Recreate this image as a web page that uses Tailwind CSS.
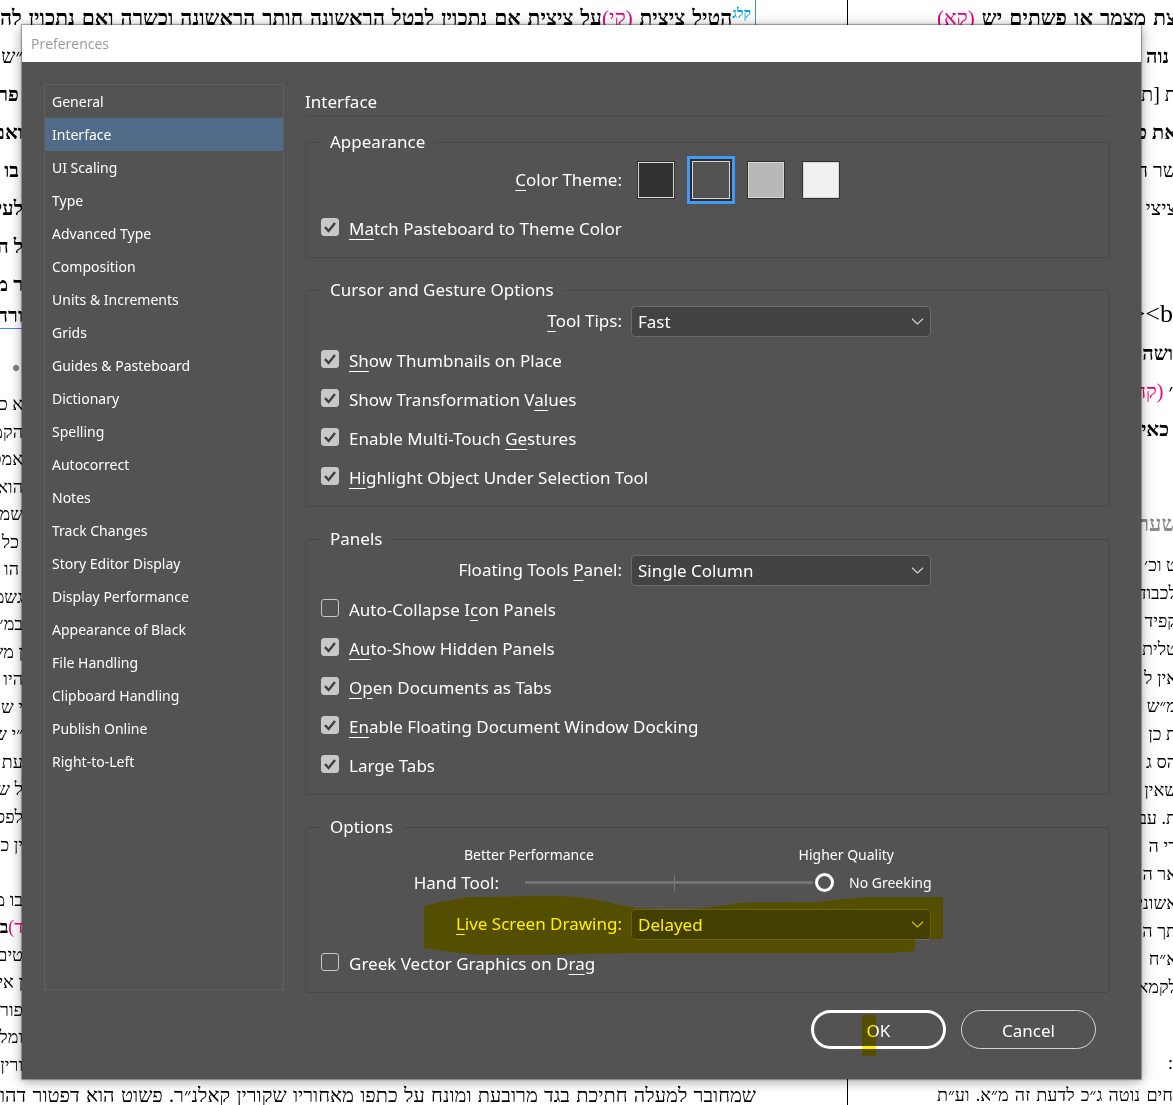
<!DOCTYPE html>
<html lang="en">
<head>
	<meta charset="UTF-8">
	<meta name="viewport" content="width=device-width, initial-scale=1.0">
	<title>Preferences</title>
	<script src="https://cdn.jsdelivr.net/npm/@tailwindcss/browser@4"></script>
</head>
<body class="relative min-h-screen overflow-hidden bg-white font-['Noto_Sans',sans-serif]">

	<!-- Document pages behind the dialog -->
	<div class="absolute inset-0 flex overflow-hidden whitespace-nowrap font-['Liberation_Serif',serif] text-[20px] text-black" dir="ltr" aria-hidden="true">
		<div class="relative flex w-[756px] shrink-0 flex-col justify-between" dir="rtl" lang="he">
			<p class="h-[37px] border-r border-[#3b8cf0] pr-1 text-[21px] leading-[37px] font-bold [text-align-last:justify]"><sup class="text-[14px] text-[#00a5e3]">קלג</sup>הטיל ציצית <span class="font-normal text-[#e6007e]">(קי)</span>על ציצית אם נתכוין לבטל הראשונה חותך הראשונה וכשרה ואם נתכוין לה</p>
			<div class="mr-auto flex w-[23px] grow flex-col">
				<div class="flex h-[290px] flex-col justify-between text-[20px] leading-[38px] font-bold">
					<p class="font-normal">״ש</p>
					<p class="pr-1">פר</p>
					<p>ואם</p>
					<p class="pr-1">בו</p>
					<p>לעי</p>
					<p>ל ה</p>
					<p>ר מ</p>
					<p class="border-b border-[#3b8cf0] leading-[25px]">ורה</p>
				</div>
				<div class="flex h-[64px] items-end pr-1 pb-[16px]"><span class="mb-1 size-[6px] rounded-full bg-[#808084]"></span></div>
				<div class="flex h-[688px] flex-col justify-between text-[18px] leading-[27px]">
					<p>א כ״</p>
					<p>הקמ</p>
					<p>אמט</p>
					<p>הוא</p>
					<p>שמת</p>
					<p class="pr-1">כל</p>
					<p class="pr-1">הו</p>
					<p>גשמ</p>
					<p>במ״</p>
					<p>ן מש</p>
					<p>היו</p>
					<p>י שמ</p>
					<p>״י ש</p>
					<p>עת</p>
					<p>ל ש</p>
					<p>לפס</p>
					<p>ין כ</p>
					<p>&nbsp;</p>
					<p>בו מ</p>
					<p class="font-bold"><span class="font-normal text-[#e6007e]">ד)</span>ב</p>
					<p>טים</p>
					<p>ן אי</p>
					<p>פור</p>
					<p>ומל</p>
					<p>ורין</p>
				</div>
			</div>
			<p class="h-[25px] text-[20px] leading-[31px] [text-align-last:justify]">שמחובר למעלה חתיכת בגד מרובעת ומונח על כתפו מאחוריו שקורין קאלנ״ר. פשוט הוא דפטור דהו</p>
		</div>
		<div class="flex min-w-0 grow">
			<div class="w-[92px] shrink-0 border-r border-black"></div>
			<div class="flex min-w-0 grow flex-col pl-[89px]" dir="rtl" lang="he">
				<p class="-mr-1 h-[37px] text-[21px] leading-[37px] font-bold [text-align-last:justify]">צת מצמר או פשתים יש <span class="font-normal text-[#e6007e]">(קא)</span></p>
				<div class="flex h-[190px] flex-col justify-between text-[20px] leading-[38px]">
					<p class="pr-1 font-bold">נוה</p>
					<p class="-mr-1">ת [ת</p>
					<p class="-mr-1 font-bold">את כ</p>
					<p class="-mr-1">שר ה</p>
					<p class="-mr-1">ציצי</p>
				</div>
				<div class="mt-[68px] flex h-[150px] flex-col justify-between text-[20px] leading-[38px] font-bold">
					<p class="font-normal"><span class="text-[26px]" dir="ltr">&gt;&lt;b</span></p>
					<p>ושה</p>
					<p>׳ <span class="font-normal text-[#e6007e]">(קה</span></p>
					<p class="pr-1">כאי</p>
				</div>
				<p class="mt-[60px] -mr-1 h-[38px] text-[22px] leading-[38px] font-bold text-[#8a8a8e]">שערי</p>
				<div class="mt-2 -mr-1 flex h-[450px] flex-col justify-between text-[18px] leading-[28px]">
					<p>ט וכ׳</p>
					<p>לכבוד</p>
					<p>קפיד</p>
					<p>טלית</p>
					<p>אין ל</p>
					<p>מ״ש י</p>
					<p>ת כן</p>
					<p>הס ג</p>
					<p>שאין</p>
					<p>ת. עב</p>
					<p>רי ה</p>
					<p>אר ה</p>
					<p>אשוני</p>
					<p>תך ה</p>
					<p>א״ח</p>
					<p>לקמא</p>
				</div>
				<p class="mt-[48px] text-[18px] leading-[28px]">:</p>
				<p class="mt-auto h-[25px] text-[18px] leading-[31px] [text-align-last:justify]">חים נוטה ג״כ לדעת זה מ״א. וע״ת</p>
			</div>
		</div>
	</div>

	<!-- Preferences dialog -->
	<div class="relative mt-[25px] mr-8 mb-[25px] ml-[22px] bg-[#535353] text-[17px] text-white shadow-[0_2px_12px_rgba(0,0,0,0.4),0_0_1px_1px_rgba(0,0,0,0.3)]" role="dialog" aria-labelledby="dialogTitle">
		<div class="h-[37px] bg-white px-[9px]">
			<h1 id="dialogTitle" class="font-['Open_Sans',sans-serif] text-[14px] leading-[37px] text-[#999999]">Preferences</h1>
		</div>

		<form class="flex gap-[21px] pt-[22px] pr-[31px] pb-[30px] pl-[22px]">
			<nav class="mb-[59px] w-[240px] shrink-0 border border-[#5f5f5f] text-[14px] leading-8">
				<a href="#" class="block px-[7px] pt-px">General</a>
				<a href="#" class="block bg-[#4f6b87] px-[7px] pt-px" aria-current="page">Interface</a>
				<a href="#" class="block px-[7px] pt-px">UI Scaling</a>
				<a href="#" class="block px-[7px] pt-px">Type</a>
				<a href="#" class="block px-[7px] pt-px">Advanced Type</a>
				<a href="#" class="block px-[7px] pt-px">Composition</a>
				<a href="#" class="block px-[7px] pt-px">Units &amp; Increments</a>
				<a href="#" class="block px-[7px] pt-px">Grids</a>
				<a href="#" class="block px-[7px] pt-px">Guides &amp; Pasteboard</a>
				<a href="#" class="block px-[7px] pt-px">Dictionary</a>
				<a href="#" class="block px-[7px] pt-px">Spelling</a>
				<a href="#" class="block px-[7px] pt-px">Autocorrect</a>
				<a href="#" class="block px-[7px] pt-px">Notes</a>
				<a href="#" class="block px-[7px] pt-px">Track Changes</a>
				<a href="#" class="block px-[7px] pt-px">Story Editor Display</a>
				<a href="#" class="block px-[7px] pt-px">Display Performance</a>
				<a href="#" class="block px-[7px] pt-px">Appearance of Black</a>
				<a href="#" class="block px-[7px] pt-px">File Handling</a>
				<a href="#" class="block px-[7px] pt-px">Clipboard Handling</a>
				<a href="#" class="block px-[7px] pt-px">Publish Online</a>
				<a href="#" class="block px-[7px] pt-px">Right-to-Left</a>
			</nav>

			<div class="min-w-0 grow">
				<h2 class="h-[33px] border-b border-[#4a4a4a] leading-9">Interface</h2>

				<div class="mt-[13px] flex flex-col gap-5">
					<fieldset class="rounded-[4px] border border-[#484848] pb-[9px] leading-6">
						<legend class="ml-[14px] px-[10px]">Appearance</legend>
						<div class="flex h-[55px] items-center pb-[3px]" role="radiogroup" aria-labelledby="themeLabel">
							<span id="themeLabel" class="w-[316px] shrink-0 text-right"><u class="underline-offset-4">C</u>olor Theme:</span>
							<div class="ml-[15px] flex gap-[17px]">
								<input type="radio" name="theme" aria-label="Dark" class="size-[38px] appearance-none border-2 border-[#d6d6d6] bg-[#323232] outline outline-[#333333] -outline-offset-1">
								<input type="radio" name="theme" aria-label="Medium dark" checked class="size-[38px] appearance-none border border-[#d6d6d6] bg-[#535353] shadow-[0_0_0_2px_#2e2e2e,0_0_0_5px_#3f9bf5]">
								<input type="radio" name="theme" aria-label="Medium light" class="size-[38px] appearance-none border-2 border-[#d6d6d6] bg-[#b8b8b8] outline outline-[#333333] -outline-offset-1">
								<input type="radio" name="theme" aria-label="Light" class="size-[38px] appearance-none border-2 border-[#d6d6d6] bg-[#f0f0f0] outline outline-[#333333] -outline-offset-1">
							</div>
						</div>
						<label class="flex h-[39px] items-center gap-[10px] pl-[15px]">
							<span class="relative mb-[3px] size-[18px]">
								<input type="checkbox" checked class="peer block size-[18px] appearance-none rounded-[3px] border border-[#c8c8c8] checked:bg-[#c8c8c8]">
								<svg class="pointer-events-none absolute inset-0 hidden peer-checked:block" viewBox="0 0 18 18" fill="none" stroke="#404040" stroke-width="2.4"><path d="M4 9.2l3.6 3.8L14 5"/></svg>
							</span>
							<span><u class="underline-offset-4">Ma</u>tch Pasteboard to Theme Color</span>
						</label>
					</fieldset>

					<fieldset class="rounded-[4px] border border-[#484848] pb-[9px] leading-6">
						<legend class="ml-[14px] px-[10px]">Cursor and Gesture Options</legend>
						<div class="flex h-[39px] items-center pb-px">
							<label for="toolTips" class="w-[316px] shrink-0 text-right"><u class="underline-offset-4">T</u>ool Tips:</label>
							<div class="relative ml-[9px] w-[300px]">
								<select id="toolTips" class="block h-[31px] w-full appearance-none rounded-[4px] border border-[#6b6b6b] bg-[#434343] pt-px pl-[6px]">
									<option>Fast</option>
									<option>Normal</option>
									<option>None</option>
								</select>
								<svg class="pointer-events-none absolute top-3 right-[7px] h-[7px] w-[13px]" viewBox="0 0 13 7" fill="none" stroke="#d0d0d0" stroke-width="1.2"><path d="M1 .8l5.5 5.2L12 .8"/></svg>
							</div>
						</div>
						<label class="flex h-[39px] items-center gap-[10px] pl-[15px]">
							<span class="relative mb-[3px] size-[18px]">
								<input type="checkbox" checked class="peer block size-[18px] appearance-none rounded-[3px] border border-[#c8c8c8] checked:bg-[#c8c8c8]">
								<svg class="pointer-events-none absolute inset-0 hidden peer-checked:block" viewBox="0 0 18 18" fill="none" stroke="#404040" stroke-width="2.4"><path d="M4 9.2l3.6 3.8L14 5"/></svg>
							</span>
							<span><u class="underline-offset-4">Sh</u>ow Thumbnails on Place</span>
						</label>
						<label class="flex h-[39px] items-center gap-[10px] pl-[15px]">
							<span class="relative mb-[3px] size-[18px]">
								<input type="checkbox" checked class="peer block size-[18px] appearance-none rounded-[3px] border border-[#c8c8c8] checked:bg-[#c8c8c8]">
								<svg class="pointer-events-none absolute inset-0 hidden peer-checked:block" viewBox="0 0 18 18" fill="none" stroke="#404040" stroke-width="2.4"><path d="M4 9.2l3.6 3.8L14 5"/></svg>
							</span>
							<span>Show Transformation V<u class="underline-offset-4">al</u>ues</span>
						</label>
						<label class="flex h-[39px] items-center gap-[10px] pl-[15px]">
							<span class="relative mb-[3px] size-[18px]">
								<input type="checkbox" checked class="peer block size-[18px] appearance-none rounded-[3px] border border-[#c8c8c8] checked:bg-[#c8c8c8]">
								<svg class="pointer-events-none absolute inset-0 hidden peer-checked:block" viewBox="0 0 18 18" fill="none" stroke="#404040" stroke-width="2.4"><path d="M4 9.2l3.6 3.8L14 5"/></svg>
							</span>
							<span>Enable Multi-Touch <u class="underline-offset-4">Ge</u>stures</span>
						</label>
						<label class="flex h-[39px] items-center gap-[10px] pl-[15px]">
							<span class="relative mb-[3px] size-[18px]">
								<input type="checkbox" checked class="peer block size-[18px] appearance-none rounded-[3px] border border-[#c8c8c8] checked:bg-[#c8c8c8]">
								<svg class="pointer-events-none absolute inset-0 hidden peer-checked:block" viewBox="0 0 18 18" fill="none" stroke="#404040" stroke-width="2.4"><path d="M4 9.2l3.6 3.8L14 5"/></svg>
							</span>
							<span><u class="underline-offset-4">Hi</u>ghlight Object Under Selection Tool</span>
						</label>
					</fieldset>

					<fieldset class="rounded-[4px] border border-[#484848] pb-[9px] leading-6">
						<legend class="ml-[14px] px-[10px]">Panels</legend>
						<div class="flex h-[39px] items-center pb-px">
							<label for="toolsPanel" class="w-[316px] shrink-0 text-right">Floating Tools <u class="underline-offset-4">P</u>anel:</label>
							<div class="relative ml-[9px] w-[300px]">
								<select id="toolsPanel" class="block h-[31px] w-full appearance-none rounded-[4px] border border-[#6b6b6b] bg-[#434343] pt-px pl-[6px]">
									<option>Single Column</option>
									<option>Double Column</option>
									<option>Single Row</option>
								</select>
								<svg class="pointer-events-none absolute top-3 right-[7px] h-[7px] w-[13px]" viewBox="0 0 13 7" fill="none" stroke="#d0d0d0" stroke-width="1.2"><path d="M1 .8l5.5 5.2L12 .8"/></svg>
							</div>
						</div>
						<label class="flex h-[39px] items-center gap-[10px] pl-[15px]">
							<span class="relative mb-[3px] size-[18px]">
								<input type="checkbox" class="peer block size-[18px] appearance-none rounded-[3px] border border-[#c8c8c8] checked:bg-[#c8c8c8]">
								<svg class="pointer-events-none absolute inset-0 hidden peer-checked:block" viewBox="0 0 18 18" fill="none" stroke="#404040" stroke-width="2.4"><path d="M4 9.2l3.6 3.8L14 5"/></svg>
							</span>
							<span>Auto-Collapse I<u class="underline-offset-4">c</u>on Panels</span>
						</label>
						<label class="flex h-[39px] items-center gap-[10px] pl-[15px]">
							<span class="relative mb-[3px] size-[18px]">
								<input type="checkbox" checked class="peer block size-[18px] appearance-none rounded-[3px] border border-[#c8c8c8] checked:bg-[#c8c8c8]">
								<svg class="pointer-events-none absolute inset-0 hidden peer-checked:block" viewBox="0 0 18 18" fill="none" stroke="#404040" stroke-width="2.4"><path d="M4 9.2l3.6 3.8L14 5"/></svg>
							</span>
							<span><u class="underline-offset-4">Au</u>to-Show Hidden Panels</span>
						</label>
						<label class="flex h-[39px] items-center gap-[10px] pl-[15px]">
							<span class="relative mb-[3px] size-[18px]">
								<input type="checkbox" checked class="peer block size-[18px] appearance-none rounded-[3px] border border-[#c8c8c8] checked:bg-[#c8c8c8]">
								<svg class="pointer-events-none absolute inset-0 hidden peer-checked:block" viewBox="0 0 18 18" fill="none" stroke="#404040" stroke-width="2.4"><path d="M4 9.2l3.6 3.8L14 5"/></svg>
							</span>
							<span><u class="underline-offset-4">Op</u>en Documents as Tabs</span>
						</label>
						<label class="flex h-[39px] items-center gap-[10px] pl-[15px]">
							<span class="relative mb-[3px] size-[18px]">
								<input type="checkbox" checked class="peer block size-[18px] appearance-none rounded-[3px] border border-[#c8c8c8] checked:bg-[#c8c8c8]">
								<svg class="pointer-events-none absolute inset-0 hidden peer-checked:block" viewBox="0 0 18 18" fill="none" stroke="#404040" stroke-width="2.4"><path d="M4 9.2l3.6 3.8L14 5"/></svg>
							</span>
							<span><u class="underline-offset-4">En</u>able Floating Document Window Docking</span>
						</label>
						<label class="flex h-[39px] items-center gap-[10px] pl-[15px]">
							<span class="relative mb-[3px] size-[18px]">
								<input type="checkbox" checked class="peer block size-[18px] appearance-none rounded-[3px] border border-[#c8c8c8] checked:bg-[#c8c8c8]">
								<svg class="pointer-events-none absolute inset-0 hidden peer-checked:block" viewBox="0 0 18 18" fill="none" stroke="#404040" stroke-width="2.4"><path d="M4 9.2l3.6 3.8L14 5"/></svg>
							</span>
							<span>Large Tabs</span>
						</label>
					</fieldset>

					<fieldset class="rounded-[4px] border border-[#484848] pb-[9px] leading-6">
						<legend class="ml-[14px] px-[10px]">Options</legend>
						<div class="flex h-[31px] w-[588px] items-center justify-between pl-[158px] text-[14px]">
							<span>Better Performance</span>
							<span>Higher Quality</span>
						</div>
						<div class="mb-[10px] flex h-[25px] items-center">
							<label for="handTool" class="w-[193px] shrink-0 text-right">Hand Tool:</label>
							<div class="relative ml-[26px] flex h-full w-[309px] items-center">
								<span class="absolute top-[5px] left-[149px] h-4 w-px bg-[#7a7a7a]"></span>
								<input id="handTool" type="range" min="0" max="2" value="2" class="relative w-full appearance-none bg-transparent [&::-webkit-slider-runnable-track]:h-[3px] [&::-webkit-slider-runnable-track]:bg-[#747474] [&::-webkit-slider-thumb]:-mt-2 [&::-webkit-slider-thumb]:size-[19px] [&::-webkit-slider-thumb]:appearance-none [&::-webkit-slider-thumb]:rounded-full [&::-webkit-slider-thumb]:border-[3px] [&::-webkit-slider-thumb]:border-white [&::-webkit-slider-thumb]:bg-[#535353] [&::-webkit-slider-thumb]:shadow-[0_0_0_2px_#535353]">
							</div>
							<output for="handTool" class="ml-[15px] text-[14px]">No Greeking</output>
						</div>
						<div class="relative flex h-[39px] items-center pb-px">
							<label for="liveDrawing" class="w-[316px] shrink-0 text-right"><u class="underline-offset-4">L</u>ive Screen Drawing:</label>
							<div class="relative ml-[9px] w-[300px]">
								<select id="liveDrawing" class="block h-[31px] w-full appearance-none rounded-[4px] border border-[#6b6b6b] bg-[#434343] pt-px pl-[6px]">
									<option>Delayed</option>
									<option>Immediate</option>
									<option>Never</option>
								</select>
								<svg class="pointer-events-none absolute top-3 right-[7px] h-[7px] w-[13px]" viewBox="0 0 13 7" fill="none" stroke="#d0d0d0" stroke-width="1.2"><path d="M1 .8l5.5 5.2L12 .8"/></svg>
							</div>
							<!-- highlighter stroke -->
							<svg class="pointer-events-none absolute -top-[9px] left-[118px] h-[60px] w-[519px] mix-blend-multiply" viewBox="0 0 519 60" fill="#fff000"><path d="M0 10L22 5L44 1C70 1 95 0 119 0C145 0 158 1 168 3C185 6 195 9 207 11Q225 14 272 13L295 10L315 7C345 5 370 7 394 6L420 3L445 1H519V43H491V55L469 57H283L200 57L130 59H56Q28 57 0 52Z"/></svg>
						</div>
						<label class="flex h-[39px] items-center gap-[10px] pl-[15px]">
							<span class="relative mb-[3px] size-[18px]">
								<input type="checkbox" class="peer block size-[18px] appearance-none rounded-[3px] border border-[#c8c8c8] checked:bg-[#c8c8c8]">
								<svg class="pointer-events-none absolute inset-0 hidden peer-checked:block" viewBox="0 0 18 18" fill="none" stroke="#404040" stroke-width="2.4"><path d="M4 9.2l3.6 3.8L14 5"/></svg>
							</span>
							<span>Greek Vector Graphics on D<u class="underline-offset-4">ra</u>g</span>
						</label>
					</fieldset>
				</div>

				<div class="mt-[17px] mr-[14px] flex justify-end gap-[15px]">
					<div class="relative">
						<button type="submit" class="block h-[39px] w-[135px] rounded-full border-[3px] border-white pt-[3px]">OK</button>
						<span class="pointer-events-none absolute top-[5px] left-[51px] h-[41px] w-[14px] bg-[#fff000] mix-blend-multiply"></span>
					</div>
					<button type="button" class="h-[39px] w-[135px] rounded-full border border-[#d6d6d6] pt-[3px]">Cancel</button>
				</div>
			</div>
		</form>
	</div>
</body>
</html>
